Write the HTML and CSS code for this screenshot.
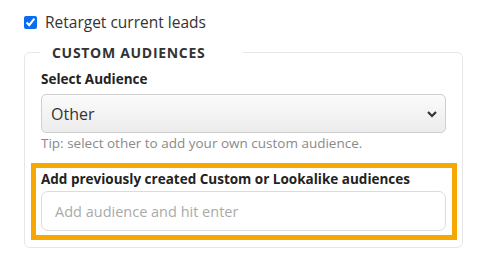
FILE: index.html
```html
<!DOCTYPE html>
<html lang="en">
<head>
    <meta charset="UTF-8">
    <title>Custom Audiences</title>
    <link rel="stylesheet" href="styles.css">
</head>
<body>
    <label class="check-row">
        <input type="checkbox" checked>
        <span>Retarget current leads</span>
    </label>

    <fieldset class="audiences">
        <legend>Custom Audiences</legend>

        <div class="field">
            <div class="field-label">Select Audience</div>
            <div class="select-wrap">
                <select class="select">
                    <option>Other</option>
                </select>
                <svg class="chevron" width="12" height="8" viewBox="0 0 12 8">
                    <path d="M2 2 L6 6 L10 2" fill="none" stroke="#333" stroke-width="2.2"/>
                </svg>
            </div>
            <div class="tip">Tip: select other to add your own custom audience.</div>
        </div>

        <div class="highlight">
            <div class="field-label">Add previously created Custom or Lookalike audiences</div>
            <input class="text-input" type="text" placeholder="Add audience and hit enter">
        </div>
    </fieldset>
</body>
</html>
```

FILE: styles.css
```css
body {
    margin: 0;
    padding: 12px 0 0 24px;
    font-family: "Open Sans", Arial, sans-serif;
    color: #333;
    background: #fff;
}
.check-row {
    display: flex;
    align-items: center;
    gap: 8px;
    font-size: 15.5px;
    height: 20px;
}
.check-row input {
    margin: 0;
    width: 13px;
    height: 13px;
    accent-color: #0b6cf0;
}
.audiences {
    width: 426px;
    margin: 11px 0 0 0;
    padding: 8px 5px 7px 6px;
    border: 1px solid #e6e6e6;
    border-radius: 6px;
}
.audiences legend {
    margin-left: 9px;
    padding: 0 38px 0 12px;
    font-size: 14px;
    font-weight: bold;
    letter-spacing: 0.7px;
    text-transform: uppercase;
    color: #333;
}
.field {
    padding: 0 11px 0 10px;
}
.field-label {
    font-size: 13.5px;
    font-weight: bold;
    color: #222;
    line-height: 18px;
}
.select-wrap {
    position: relative;
    margin-top: 6px;
}
.select {
    width: 100%;
    height: 39px;
    padding: 0 9px;
    appearance: none;
    -webkit-appearance: none;
    border: 1px solid #cfcfcf;
    border-radius: 5px;
    background: linear-gradient(#fbfbfb, #ececec);
    font-family: inherit;
    font-size: 16px;
    color: #333;
}
.chevron {
    position: absolute;
    right: 8px;
    top: 16px;
    pointer-events: none;
}
.tip {
    margin-top: 1px;
    font-size: 13.5px;
    color: #8a8a8a;
    line-height: 18px;
}
.highlight {
    margin-top: 11px;
    border: 5px solid #f7a800;
    padding: 2px 6px 4px 5px;
}
.text-input {
    display: block;
    box-sizing: border-box;
    width: 100%;
    height: 40px;
    margin-top: 3px;
    padding: 0 13px;
    border: 1px solid #dcdcdc;
    border-radius: 7px;
    font-family: inherit;
    font-size: 14.5px;
    color: #333;
}
.text-input::placeholder {
    color: #aaa;
}
```
